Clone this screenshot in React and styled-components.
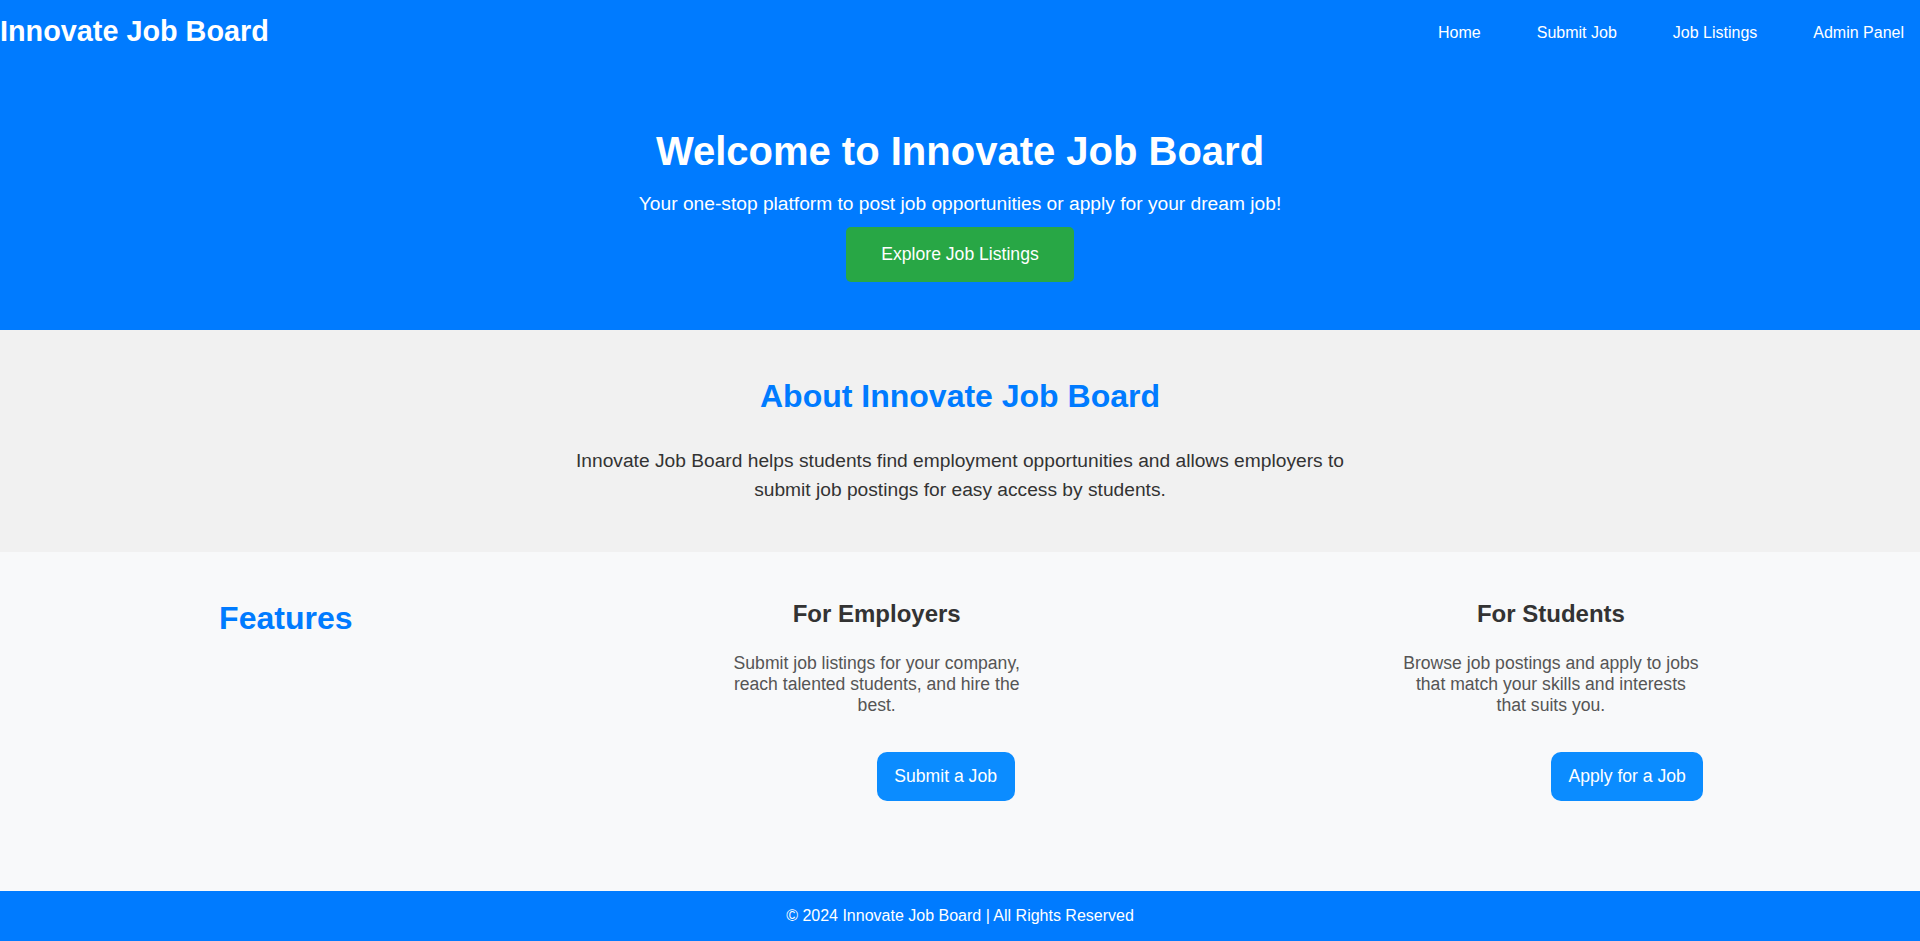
import React from 'react'
import styled, { createGlobalStyle } from 'styled-components'

const GlobalStyle = createGlobalStyle`
  body {
    margin: 0;
    font-family: "Liberation Sans", Arial, sans-serif;
    background: #fff;
  }
  * { box-sizing: border-box; }
`;

const navItems = ['Home', 'Submit Job', 'Job Listings', 'Admin Panel'];

const features = [
  {
    title: 'For Employers',
    text: 'Submit job listings for your company, reach talented students, and hire the best.',
    action: 'Submit a Job',
  },
  {
    title: 'For Students',
    text: 'Browse job postings and apply to jobs that match your skills and interests that suits you.',
    action: 'Apply for a Job',
  },
];

export default function App() {
  return (
    <Page>
      <GlobalStyle />
      <Header>
        <Logo>Innovate Job Board</Logo>
        <nav>
          <NavList>
            {navItems.map((item) => (
              <li key={item}>
                <NavLink href="#">{item}</NavLink>
              </li>
            ))}
          </NavList>
        </nav>
      </Header>

      <Hero>
        <HeroTitle>Welcome to Innovate Job Board</HeroTitle>
        <HeroText>Your one-stop platform to post job opportunities or apply for your dream job!</HeroText>
        <HeroButton href="#">Explore Job Listings</HeroButton>
      </Hero>

      <About>
        <AboutTitle>About Innovate Job Board</AboutTitle>
        <AboutText>
          Innovate Job Board helps students find employment opportunities and allows employers to submit job postings for easy access by students.
        </AboutText>
      </About>

      <Features>
        <FeaturesTitle>Features</FeaturesTitle>
        {features.map((f) => (
          <FeatureCard key={f.title}>
            <CardTitle>{f.title}</CardTitle>
            <CardText>{f.text}</CardText>
            <CardButton href="#">{f.action}</CardButton>
          </FeatureCard>
        ))}
      </Features>

      <Footer>© 2024 Innovate Job Board | All Rights Reserved</Footer>
    </Page>
  );
}

const Page = styled.div`
  min-height: 100vh;
  display: flex;
  flex-direction: column;
`;

const Header = styled.header`
  background: #007bff;
  color: #fff;
  display: flex;
  justify-content: space-between;
  align-items: center;
  padding: 15px 0;
`;

const Logo = styled.h1`
  margin: 0;
  font-size: 28.8px;
  font-weight: bold;
`;

const NavList = styled.ul`
  display: flex;
  gap: 24px;
  list-style: none;
  margin: 0;
  padding: 0;
`;

const NavLink = styled.a`
  display: block;
  color: #fff;
  text-decoration: none;
  font-size: 16px;
  padding: 7px 16px 5px;
`;

const Hero = styled.section`
  background: #007bff;
  color: #fff;
  display: flex;
  flex-direction: column;
  align-items: center;
  text-align: center;
  padding: 66px 20px 48px;
`;

const HeroTitle = styled.h2`
  margin: 0 0 19px;
  font-size: 40px;
`;

const HeroText = styled.p`
  margin: 0 0 12px;
  font-size: 19.2px;
`;

const HeroButton = styled.a`
  background: #28a745;
  color: #fff;
  text-decoration: none;
  font-size: 17.6px;
  padding: 17px 35.2px;
  border-radius: 5px;
`;

const About = styled.section`
  background: #f1f1f1;
  text-align: center;
  padding: 48px 20px 47px;
`;

const AboutTitle = styled.h2`
  margin: 0 0 32px;
  font-size: 32px;
  color: #007bff;
`;

const AboutText = styled.p`
  margin: 0 auto;
  max-width: 800px;
  font-size: 19.2px;
  line-height: 1.5;
  color: #333;
`;

const Features = styled.section`
  flex: 1;
  background: #f8f9fa;
  display: flex;
  justify-content: space-around;
  align-items: flex-start;
  padding: 48px 32px 0;
`;

const FeaturesTitle = styled.h2`
  margin: 0;
  font-size: 32px;
  color: #007bff;
`;

const FeatureCard = styled.div`
  width: 300px;
  display: flex;
  flex-direction: column;
  text-align: center;
`;

const CardTitle = styled.h3`
  margin: 0 0 25px;
  font-size: 24px;
  color: #333;
`;

const CardText = styled.p`
  margin: 0 0 36px;
  font-size: 17.6px;
  color: #555;
`;

const CardButton = styled.a`
  align-self: flex-start;
  margin-left: 50%;
  background: #0b8cff;
  color: #fff;
  text-decoration: none;
  font-size: 17.6px;
  padding: 14px 17.6px;
  border-radius: 10px;
  white-space: nowrap;
`;

const Footer = styled.footer`
  background: #007bff;
  color: #fff;
  text-align: center;
  font-size: 16px;
  padding: 16px;
`;
